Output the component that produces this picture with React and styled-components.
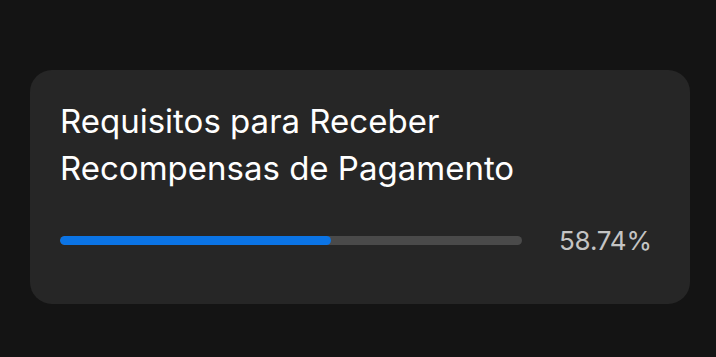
import React from 'react';
import styled, { createGlobalStyle } from 'styled-components';

const GlobalStyle = createGlobalStyle`
  html, body {
    margin: 0;
    padding: 0;
    background-color: #141414;
    font-family: Inter, "Noto Sans", sans-serif;
  }
`;

const Page = styled.div`
  width: 716px;
  height: 357px;
  box-sizing: border-box;
  padding: 70px 27px 0 30px;
`;

const Card = styled.div`
  box-sizing: border-box;
  width: 660px;
  height: 234px;
  background-color: #262626;
  border-radius: 22px;
  padding: 28px 40px 0 30px;
`;

const Title = styled.h2`
  margin: 0;
  font-size: 33px;
  font-weight: 400;
  line-height: 47px;
  color: #ffffff;
  width: 480px;
`;

const ProgressRow = styled.div`
  display: flex;
  align-items: center;
  gap: 37px;
  margin-top: 33px;
`;

const Track = styled.div`
  flex: 0 0 462px;
  height: 9px;
  border-radius: 5px;
  background-color: #4a4a4a;
  overflow: hidden;
`;

const Fill = styled.div`
  height: 100%;
  border-radius: 5px;
  background-color: #0b74e5;
`;

const Percent = styled.span`
  font-size: 26px;
  color: #c4c4c4;
  letter-spacing: -0.2px;
`;

const progress = 58.74;

export default function App() {
  return (
    <>
      <GlobalStyle />
      <Page>
        <Card>
          <Title>Requisitos para Receber Recompensas de Pagamento</Title>
          <ProgressRow>
            <Track>
              <Fill style={{ width: `${progress}%` }} />
            </Track>
            <Percent>{progress}%</Percent>
          </ProgressRow>
        </Card>
      </Page>
    </>
  );
}
